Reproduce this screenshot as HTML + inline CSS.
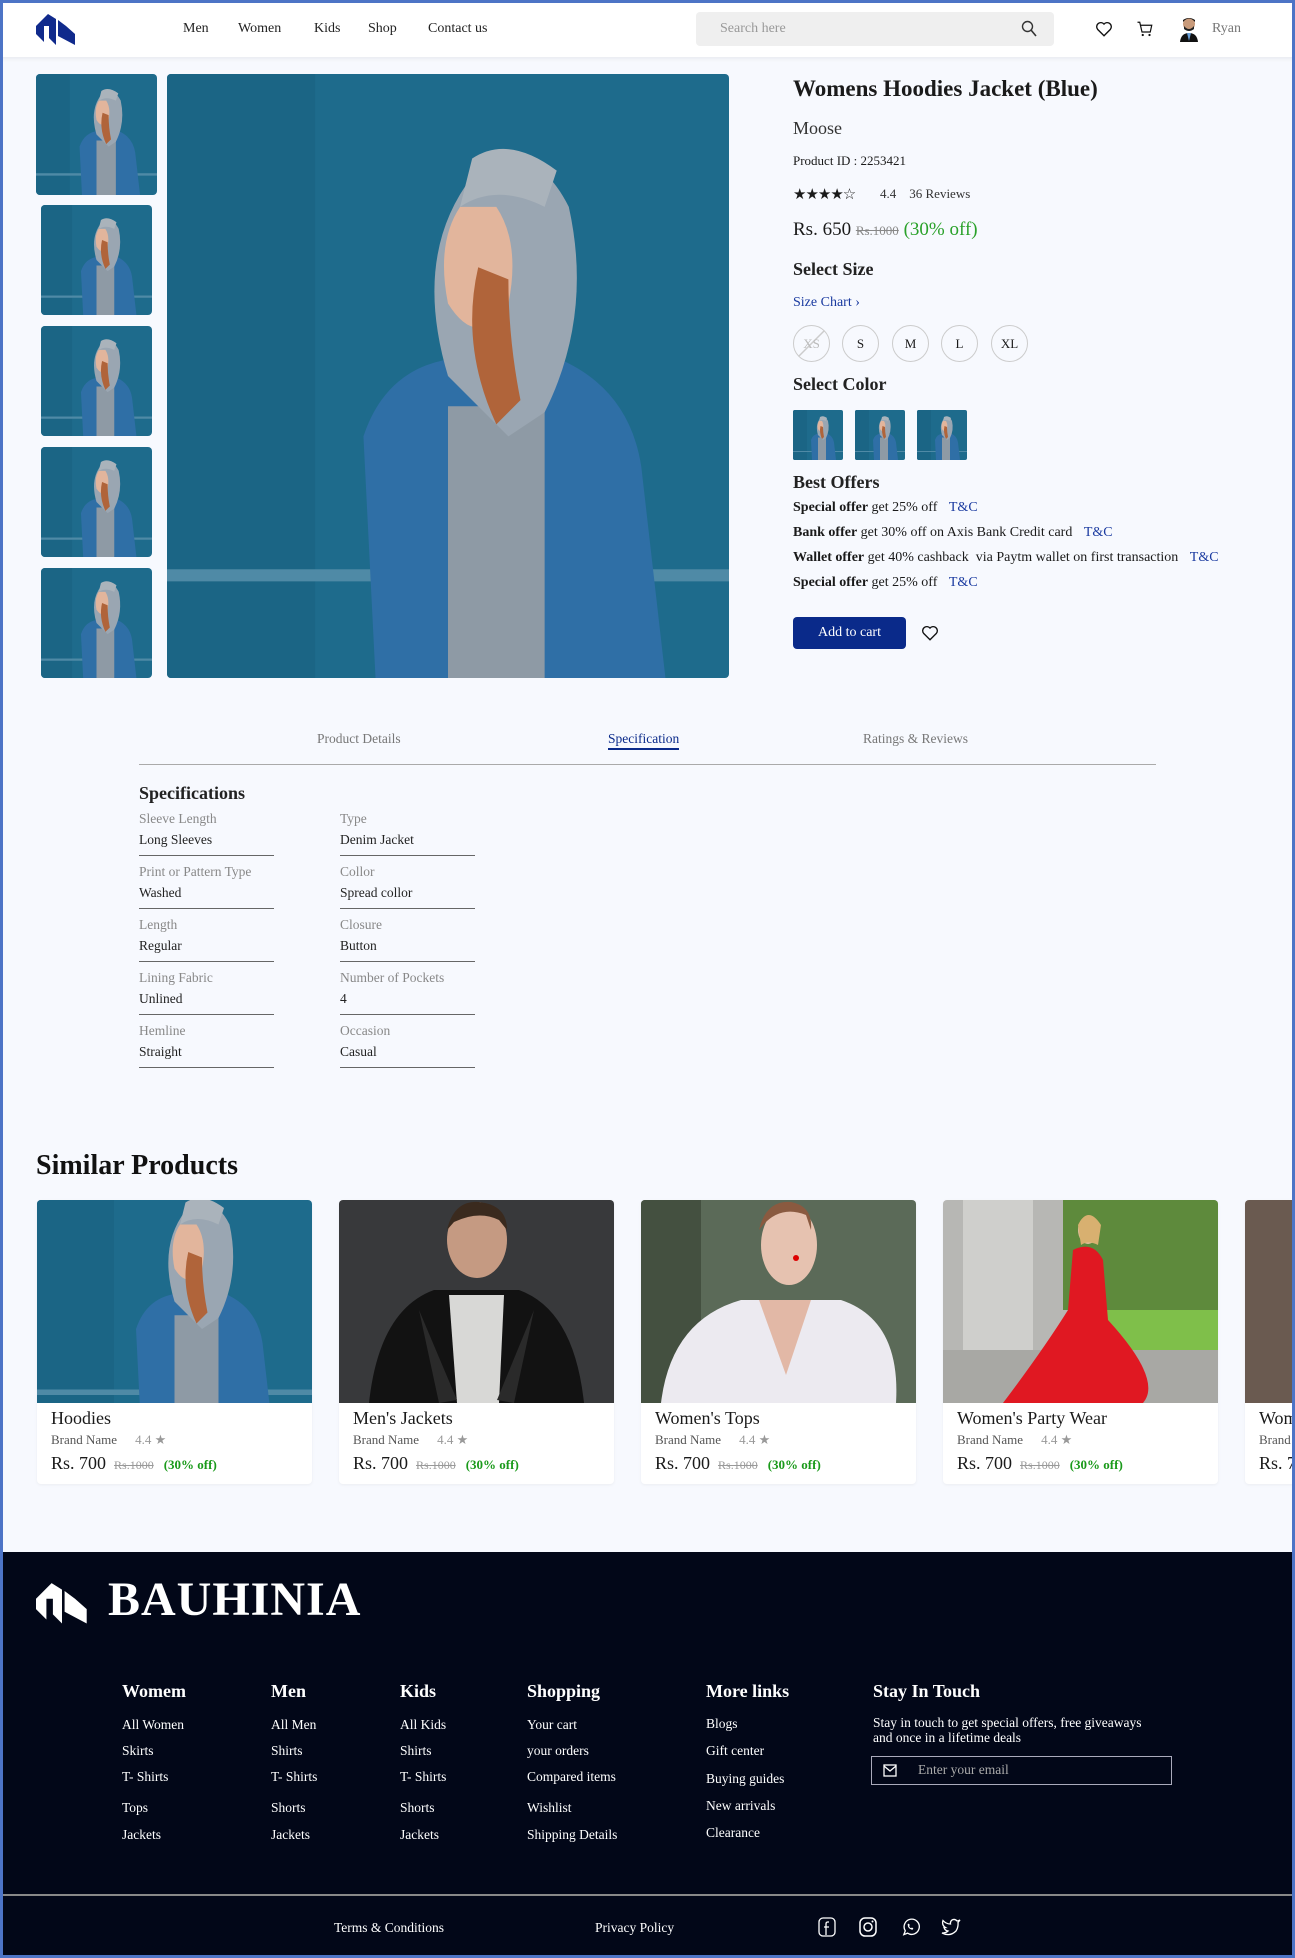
<!DOCTYPE html>
<html><head><meta charset="utf-8">
<style>
*{margin:0;padding:0;box-sizing:border-box}
body{width:1295px;height:1958px;background:#f7f9fe;font-family:"Liberation Serif",serif;color:#1a1a1a;position:relative;overflow:hidden}
.frame{position:absolute;left:0;top:0;width:1295px;height:1958px;border:3px solid #4d74c6;pointer-events:none;z-index:10}
.a{position:absolute;white-space:nowrap}
.nav{position:absolute;left:0;top:0;width:1295px;height:57px;background:#fff;box-shadow:0 2px 4px rgba(0,0,0,.06)}
.nav .a{font-size:14px;top:21px;color:#222}
.img{position:absolute;overflow:hidden;border-radius:4px}
.img svg{width:100%;height:100%;display:block}
.circ{position:absolute;width:37px;height:37px;border:1px solid #ccc;border-radius:50%;font-size:13px;text-align:center;line-height:35px;top:325px}
.off{font-size:14px;left:793px}
.off b{font-weight:bold}
.tc{color:#1a3aa0;margin-left:8px}
.lab{font-size:13.5px;color:#888}
.val{font-size:13.5px;color:#222}
.ln{position:absolute;height:1px;background:#666;width:135px}
.card{position:absolute;top:1200px;width:275px;height:284px;background:#fff;border-radius:4px;overflow:hidden;box-shadow:0 1px 3px rgba(0,0,0,.05)}
.card .pic{position:absolute;left:0;top:0;width:275px;height:203px}
.card .t{position:absolute;left:14px;top:208px;font-size:18px}
.card .b{position:absolute;left:14px;top:232px;font-size:13px;color:#555}
.card .b span{color:#999;margin-left:18px}
.card .p{position:absolute;left:14px;top:253px;font-size:18px}
.card .p s{font-size:12px;color:#999;margin-left:8px}
.card .p i{font-style:normal;font-size:13px;color:#1a9a1a;margin-left:10px;font-weight:bold}
.foot{position:absolute;left:0;top:1552px;width:1295px;height:406px;background:#020718;color:#fff}
.fh{position:absolute;top:129px;font-size:18px;font-weight:bold}
.fi{position:absolute;font-size:13.5px}
</style></head><body>
<svg width="0" height="0" style="position:absolute">
<defs>
<symbol id="hood" viewBox="0 0 100 100" preserveAspectRatio="xMidYMid slice">
<rect width="100" height="100" fill="#1e6b8c"/>
<rect x="0" y="0" width="28" height="100" fill="#1b6585"/>
<rect x="0" y="82" width="100" height="2" fill="#4f8aa6"/>
<path d="M38 100 L36 60 Q40 48 52 47 L68 47 Q80 52 82 65 L86 100Z" fill="#2f6fa6"/>
<path d="M50 100 L50 55 L66 55 L66 100Z" fill="#8e9aa5"/>
<path d="M50 50 Q44 30 54 17 Q64 10 70 22 Q74 40 66 56 L60 60 Z" fill="#9aa6b2"/>
<path d="M52 22 Q48 28 50 38 Q55 46 60 38 Q62 28 58 22Z" fill="#e2b59c"/>
<path d="M55 32 Q52 45 58 58 L62 54 Q60 44 60 34Z" fill="#b0643a"/>
<path d="M54 14 Q60 10 68 16 L66 22 Q58 18 52 22Z" fill="#aab3bb"/>
</symbol>
</defs></svg>

<div class="nav">
<svg class="a" style="left:36px;top:12px" width="40" height="33" viewBox="0 0 40 33"><path d="M0 14 L12 2 L20 7 L20 33 L13 26 L13 14 L8 14 L8 30 L0 22Z M22 8 L30 14 L39 22 L39 33 L22 24Z" fill="#102a8c"/></svg>
<span class="a" style="left:183px">Men</span>
<span class="a" style="left:238px">Women</span>
<span class="a" style="left:314px">Kids</span>
<span class="a" style="left:368px">Shop</span>
<span class="a" style="left:428px">Contact us</span>
<div class="a" style="left:696px;top:12px;width:358px;height:34px;background:#efefef;border-radius:4px"></div>
<span class="a" style="left:720px;color:#999">Search here</span>
<svg class="a" style="left:1021px;top:20px" width="16" height="18" viewBox="0 0 16 18"><circle cx="6.5" cy="6.5" r="5" fill="none" stroke="#333" stroke-width="1.4"/><path d="M10 10 L15 16" stroke="#333" stroke-width="1.6"/></svg>
<svg class="a" style="left:1095px;top:20px" width="18" height="18" viewBox="0 0 24 24"><path d="M12 21 L3.5 12.5 A5 5 0 0 1 12 5.5 A5 5 0 0 1 20.5 12.5Z" fill="none" stroke="#111" stroke-width="1.8"/></svg>
<svg class="a" style="left:1136px;top:20px" width="18" height="18" viewBox="0 0 24 24"><path d="M2 3 H5 L8 16 H19 L21 7 H6" fill="none" stroke="#111" stroke-width="1.6"/><circle cx="9" cy="20" r="1.5" fill="#111"/><circle cx="18" cy="20" r="1.5" fill="#111"/></svg>
<svg class="a" style="left:1179px;top:16px" width="20" height="26" viewBox="0 0 20 26"><circle cx="10" cy="8" r="6" fill="#c89a7a"/><path d="M4 6 Q10 -1 16 6 L16 4 Q10 0 4 4Z" fill="#111"/><path d="M5 10 Q10 16 15 10 L15 13 Q10 17 5 13Z" fill="#222"/><path d="M1 26 Q2 17 10 17 Q18 17 19 26Z" fill="#111"/><path d="M8 17 L10 25 L12 17Z" fill="#6aa0d8"/></svg>
<span class="a" style="left:1212px;color:#777">Ryan</span>
</div>

<div class="img" style="left:36px;top:74px;width:121px;height:121px"><svg><use href="#hood"/></svg></div>
<div class="img" style="left:41px;top:205px;width:111px;height:110px"><svg><use href="#hood"/></svg></div>
<div class="img" style="left:41px;top:326px;width:111px;height:110px"><svg><use href="#hood"/></svg></div>
<div class="img" style="left:41px;top:447px;width:111px;height:110px"><svg><use href="#hood"/></svg></div>
<div class="img" style="left:41px;top:568px;width:111px;height:110px"><svg><use href="#hood"/></svg></div>
<div class="img" style="left:167px;top:74px;width:562px;height:604px"><svg><use href="#hood"/></svg></div>

<span class="a" style="left:793px;top:76px;font-size:23px;font-weight:bold">Womens Hoodies Jacket (Blue)</span>
<span class="a" style="left:793px;top:118px;font-size:18px;color:#333">Moose</span>
<span class="a" style="left:793px;top:153px;font-size:13px">Product ID : 2253421</span>
<span class="a" style="left:793px;top:185px;font-size:15px;letter-spacing:-1px">★★★★☆</span>
<span class="a" style="left:880px;top:186px;font-size:13px;color:#333">4.4 &nbsp;&nbsp; 36 Reviews</span>
<span class="a" style="left:793px;top:219px;font-size:19px">Rs. 650 <s style="font-size:13px;color:#888">Rs.1000</s> <span style="color:#2aa12a">(30% off)</span></span>
<span class="a" style="left:793px;top:259px;font-size:18px;font-weight:bold;color:#222">Select Size</span>
<span class="a" style="left:793px;top:295px;font-size:14px;color:#1a3aa0">Size Chart ›</span>
<div class="circ" style="left:793px;color:#bbb;background:linear-gradient(135deg,transparent 48%,#ccc 49%,#ccc 51%,transparent 52%)">XS</div>
<div class="circ" style="left:842px">S</div>
<div class="circ" style="left:892px">M</div>
<div class="circ" style="left:941px">L</div>
<div class="circ" style="left:991px">XL</div>
<span class="a" style="left:793px;top:374px;font-size:18px;font-weight:bold;color:#222">Select Color</span>
<div class="img" style="left:793px;top:410px;width:50px;height:50px;border-radius:2px"><svg><use href="#hood"/></svg></div>
<div class="img" style="left:855px;top:410px;width:50px;height:50px;border-radius:2px"><svg><use href="#hood"/></svg></div>
<div class="img" style="left:917px;top:410px;width:50px;height:50px;border-radius:2px"><svg><use href="#hood"/></svg></div>
<span class="a" style="left:793px;top:472px;font-size:18px;font-weight:bold;color:#222">Best Offers</span>
<span class="a off" style="top:500px"><b>Special offer</b> get 25% off <span class="tc">T&amp;C</span></span>
<span class="a off" style="top:525px"><b>Bank offer</b> get 30% off on Axis Bank Credit card <span class="tc">T&amp;C</span></span>
<span class="a off" style="top:550px"><b>Wallet offer</b> get 40% cashback &nbsp;via Paytm wallet on first transaction <span class="tc">T&amp;C</span></span>
<span class="a off" style="top:575px"><b>Special offer</b> get 25% off <span class="tc">T&amp;C</span></span>
<div class="a" style="left:793px;top:617px;width:113px;height:32px;background:#0a2a8a;border-radius:4px;color:#fff;font-size:14px;text-align:center;line-height:32px">Add to cart</div>
<svg class="a" style="left:921px;top:624px" width="18" height="18" viewBox="0 0 24 24"><path d="M12 21 L3.5 12.5 A5 5 0 0 1 12 5.5 A5 5 0 0 1 20.5 12.5Z" fill="none" stroke="#111" stroke-width="1.8"/></svg>

<span class="a" style="left:317px;top:731px;font-size:13.5px;color:#777">Product Details</span>
<span class="a" style="left:608px;top:731px;font-size:13.5px;color:#0a2a8a;border-bottom:2px solid #0a2a8a;padding-bottom:1px">Specification</span>
<span class="a" style="left:863px;top:731px;font-size:13.5px;color:#777">Ratings &amp; Reviews</span>
<div class="a" style="left:139px;top:764px;width:1017px;height:1px;background:#aaa"></div>

<span class="a" style="left:139px;top:783px;font-size:18px;font-weight:bold;color:#222">Specifications</span>
<span class="a lab" style="left:139px;top:811px">Sleeve Length</span><span class="a val" style="left:139px;top:832px">Long Sleeves</span><div class="ln" style="left:139px;top:855px"></div>
<span class="a lab" style="left:340px;top:811px">Type</span><span class="a val" style="left:340px;top:832px">Denim Jacket</span><div class="ln" style="left:340px;top:855px"></div>
<span class="a lab" style="left:139px;top:864px">Print or Pattern Type</span><span class="a val" style="left:139px;top:885px">Washed</span><div class="ln" style="left:139px;top:908px"></div>
<span class="a lab" style="left:340px;top:864px">Collor</span><span class="a val" style="left:340px;top:885px">Spread collor</span><div class="ln" style="left:340px;top:908px"></div>
<span class="a lab" style="left:139px;top:917px">Length</span><span class="a val" style="left:139px;top:938px">Regular</span><div class="ln" style="left:139px;top:961px"></div>
<span class="a lab" style="left:340px;top:917px">Closure</span><span class="a val" style="left:340px;top:938px">Button</span><div class="ln" style="left:340px;top:961px"></div>
<span class="a lab" style="left:139px;top:970px">Lining Fabric</span><span class="a val" style="left:139px;top:991px">Unlined</span><div class="ln" style="left:139px;top:1014px"></div>
<span class="a lab" style="left:340px;top:970px">Number of Pockets</span><span class="a val" style="left:340px;top:991px">4</span><div class="ln" style="left:340px;top:1014px"></div>
<span class="a lab" style="left:139px;top:1023px">Hemline</span><span class="a val" style="left:139px;top:1044px">Straight</span><div class="ln" style="left:139px;top:1067px"></div>
<span class="a lab" style="left:340px;top:1023px">Occasion</span><span class="a val" style="left:340px;top:1044px">Casual</span><div class="ln" style="left:340px;top:1067px"></div>

<span class="a" style="left:36px;top:1150px;font-size:28px;font-weight:bold;color:#111">Similar Products</span>

<div class="card" style="left:37px"><div class="pic"><svg width="275" height="203"><use href="#hood"/></svg></div><span class="t">Hoodies</span><span class="b">Brand Name<span>4.4 ★</span></span><span class="p">Rs. 700<s>Rs.1000</s><i>(30% off)</i></span></div>
<div class="card" style="left:339px"><div class="pic"><svg width="275" height="203" viewBox="0 0 275 203"><rect width="275" height="203" fill="#38393b"/><path d="M30 203 Q40 110 95 90 L180 90 Q235 110 245 203Z" fill="#121212"/><path d="M110 95 L165 95 L160 203 L118 203Z" fill="#d8d8d6"/><ellipse cx="138" cy="40" rx="30" ry="38" fill="#c59a82"/><path d="M108 30 Q115 0 140 2 Q168 5 168 30 L160 20 Q140 10 115 22Z" fill="#3a2a1e"/><path d="M80 110 L118 200 L100 203 Z M195 110 L158 200 L175 203Z" fill="#2a2a2a"/></svg></div><span class="t">Men's Jackets</span><span class="b">Brand Name<span>4.4 ★</span></span><span class="p">Rs. 700<s>Rs.1000</s><i>(30% off)</i></span></div>
<div class="card" style="left:641px"><div class="pic"><svg width="275" height="203" viewBox="0 0 275 203"><rect width="275" height="203" fill="#5b6a58"/><rect x="0" y="0" width="60" height="203" fill="#445040"/><path d="M20 203 Q30 120 100 100 L200 100 Q260 120 255 203Z" fill="#eceaf0"/><path d="M118 100 L145 175 L170 100Z" fill="#e2b8a6"/><ellipse cx="148" cy="45" rx="28" ry="40" fill="#e6c2b0"/><path d="M118 30 Q125 0 150 2 Q172 6 170 30 L165 15 Q140 5 122 25Z" fill="#8a5a40"/><circle cx="155" cy="58" r="3" fill="#d00"/></svg></div><span class="t">Women's Tops</span><span class="b">Brand Name<span>4.4 ★</span></span><span class="p">Rs. 700<s>Rs.1000</s><i>(30% off)</i></span></div>
<div class="card" style="left:943px"><div class="pic"><svg width="275" height="203" viewBox="0 0 275 203"><rect width="275" height="203" fill="#b7b7b4"/><rect x="120" y="0" width="155" height="110" fill="#5e8a3c"/><rect x="150" y="110" width="125" height="40" fill="#7fbf4a"/><rect x="0" y="150" width="275" height="53" fill="#a8a8a4"/><rect x="20" y="0" width="70" height="150" fill="#cfcfcc"/><path d="M130 50 Q150 40 160 60 L165 120 Q220 180 200 203 L60 203 Q100 150 125 110Z" fill="#e01822"/><ellipse cx="145" cy="30" rx="10" ry="14" fill="#e3bfa0"/><path d="M135 25 Q145 5 158 25 L155 45 Q145 40 138 45Z" fill="#d8b070"/></svg></div><span class="t">Women's Party Wear</span><span class="b">Brand Name<span>4.4 ★</span></span><span class="p">Rs. 700<s>Rs.1000</s><i>(30% off)</i></span></div>
<div class="card" style="left:1245px"><div class="pic" style="background:#6a5a50"></div><span class="t">Women's</span><span class="b">Brand Name</span><span class="p">Rs. 700</span></div>

<div class="foot">
<svg class="a" style="left:36px;top:28px" width="52" height="44" viewBox="0 0 40 33"><path d="M0 14 L12 2 L20 7 L20 33 L13 26 L13 14 L8 14 L8 30 L0 22Z M22 8 L30 14 L39 22 L39 33 L22 24Z" fill="#fff"/></svg>
<span class="a" style="left:108px;top:20px;font-size:48px;font-weight:bold;letter-spacing:1px">BAUHINIA</span>
<span class="fh" style="left:122px">Womem</span>
<span class="fh" style="left:271px">Men</span>
<span class="fh" style="left:400px">Kids</span>
<span class="fh" style="left:527px">Shopping</span>
<span class="fh" style="left:706px">More links</span>
<span class="fh" style="left:873px">Stay In Touch</span>
<span class="fi" style="left:122px;top:165px">All Women</span><span class="fi" style="left:122px;top:191px">Skirts</span><span class="fi" style="left:122px;top:217px">T- Shirts</span><span class="fi" style="left:122px;top:248px">Tops</span><span class="fi" style="left:122px;top:275px">Jackets</span>
<span class="fi" style="left:271px;top:165px">All Men</span><span class="fi" style="left:271px;top:191px">Shirts</span><span class="fi" style="left:271px;top:217px">T- Shirts</span><span class="fi" style="left:271px;top:248px">Shorts</span><span class="fi" style="left:271px;top:275px">Jackets</span>
<span class="fi" style="left:400px;top:165px">All Kids</span><span class="fi" style="left:400px;top:191px">Shirts</span><span class="fi" style="left:400px;top:217px">T- Shirts</span><span class="fi" style="left:400px;top:248px">Shorts</span><span class="fi" style="left:400px;top:275px">Jackets</span>
<span class="fi" style="left:527px;top:165px">Your cart</span><span class="fi" style="left:527px;top:191px">your orders</span><span class="fi" style="left:527px;top:217px">Compared items</span><span class="fi" style="left:527px;top:248px">Wishlist</span><span class="fi" style="left:527px;top:275px">Shipping Details</span>
<span class="fi" style="left:706px;top:164px">Blogs</span><span class="fi" style="left:706px;top:191px">Gift center</span><span class="fi" style="left:706px;top:219px">Buying guides</span><span class="fi" style="left:706px;top:246px">New arrivals</span><span class="fi" style="left:706px;top:273px">Clearance</span>
<span class="fi" style="left:873px;top:163px;line-height:15px">Stay in touch to get special offers, free giveaways<br>and once in a lifetime deals</span>
<div class="a" style="left:871px;top:204px;width:301px;height:29px;border:1px solid #aab"></div>
<svg class="a" style="left:883px;top:212px" width="14" height="13" viewBox="0 0 14 13"><rect x="1" y="1" width="12" height="11" fill="none" stroke="#fff" stroke-width="1.3"/><path d="M1 2 L7 7 L13 2" fill="none" stroke="#fff" stroke-width="1.3"/></svg>
<span class="fi" style="left:918px;top:210px;color:#aaa">Enter your email</span>
<div class="a" style="left:0;top:342px;width:1295px;height:2px;background:#888"></div>
<span class="fi" style="left:334px;top:368px">Terms &amp; Conditions</span>
<span class="fi" style="left:595px;top:368px">Privacy Policy</span>
<svg class="a" style="left:818px;top:365px" width="18" height="20" viewBox="0 0 18 20"><rect x="1" y="1" width="16" height="18" rx="4" fill="none" stroke="#fff" stroke-width="1.3"/><path d="M11 5 H9.5 Q8 5 8 7 V18 M6 10 H11" fill="none" stroke="#fff" stroke-width="1.3"/></svg>
<svg class="a" style="left:859px;top:365px" width="18" height="20" viewBox="0 0 18 20"><rect x="1" y="1" width="16" height="18" rx="5" fill="none" stroke="#fff" stroke-width="1.5"/><circle cx="9" cy="10" r="4" fill="none" stroke="#fff" stroke-width="1.5"/><circle cx="13.5" cy="4.5" r="1" fill="#fff"/></svg>
<svg class="a" style="left:901px;top:365px" width="19" height="20" viewBox="0 0 20 20"><path d="M3 18 L4.5 14 A8 8 0 1 1 7 16.5Z" fill="none" stroke="#fff" stroke-width="1.4"/><path d="M7 7 Q7 12 12 13 L13 11.5 L11.5 10.5 L10.5 11.3 Q9 10.5 8.5 9 L9.3 8 L8.3 6.5Z" fill="#fff"/></svg>
<svg class="a" style="left:941px;top:365px" width="20" height="20" viewBox="0 0 20 20"><path d="M19 3 Q17 4 16 4 Q14 1.5 11 3 Q9 4.5 9.5 7 Q5 7 2 3.5 Q0.5 8 4.5 10.5 L3 10.5 Q4 13.5 7 14 Q5 16 1 16 Q9 20 15 14 Q17.5 10 17 5.5Z" fill="none" stroke="#fff" stroke-width="1.3"/></svg>
</div>
<div class="frame"></div>
</body></html>
